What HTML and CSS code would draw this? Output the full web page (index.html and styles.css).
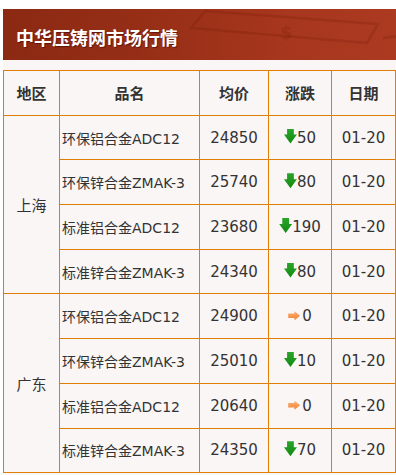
FILE: index.html
```html
<!DOCTYPE html>
<html lang="zh-CN">
<head>
<meta charset="utf-8">
<title>中华压铸网市场行情</title>
<link rel="stylesheet" href="styles.css">
</head>
<body>
<div class="panel">
  <div class="banner">
    <svg class="bill" width="393" height="51" viewBox="0 0 393 51" aria-hidden="true">
      <polygon points="202,2 375,15 364,34 188,19" fill="none" stroke="rgba(110,20,0,0.2)" stroke-width="2.5"/>
      <line x1="380" y1="29" x2="396" y2="27" stroke="rgba(110,20,0,0.2)" stroke-width="2.5"/>
      <text x="277" y="30" font-size="18" font-weight="bold" fill="rgba(110,20,0,0.2)" font-family="DejaVu Sans, sans-serif">$</text>
    </svg>
    <h1 class="title">中华压铸网市场行情</h1>
  </div>
  <table class="quotes">
    <colgroup>
      <col class="c-area"><col class="c-name"><col class="c-price"><col class="c-chg"><col class="c-date">
    </colgroup>
    <thead>
      <tr><th>地区</th><th>品名</th><th>均价</th><th>涨跌</th><th>日期</th></tr>
    </thead>
    <tbody>
      <tr><td class="area" rowspan="4">上海</td><td class="name">环保铝合金ADC12</td><td class="num">24850</td><td class="num"><span class="dn"></span>50</td><td class="num">01-20</td></tr>
      <tr><td class="name">环保锌合金ZMAK-3</td><td class="num">25740</td><td class="num"><span class="dn"></span>80</td><td class="num">01-20</td></tr>
      <tr><td class="name">标准铝合金ADC12</td><td class="num">23680</td><td class="num"><span class="dn"></span>190</td><td class="num">01-20</td></tr>
      <tr><td class="name">标准锌合金ZMAK-3</td><td class="num">24340</td><td class="num"><span class="dn"></span>80</td><td class="num">01-20</td></tr>
      <tr><td class="area" rowspan="4">广东</td><td class="name">环保铝合金ADC12</td><td class="num">24900</td><td class="num"><span class="eq"></span>0</td><td class="num">01-20</td></tr>
      <tr><td class="name">环保锌合金ZMAK-3</td><td class="num">25010</td><td class="num"><span class="dn"></span>10</td><td class="num">01-20</td></tr>
      <tr><td class="name">标准铝合金ADC12</td><td class="num">20640</td><td class="num"><span class="eq"></span>0</td><td class="num">01-20</td></tr>
      <tr><td class="name">标准锌合金ZMAK-3</td><td class="num">24350</td><td class="num"><span class="dn"></span>70</td><td class="num">01-20</td></tr>
    </tbody>
  </table>
</div>
</body>
</html>
```

FILE: styles.css
```css
html, body {
  margin: 0;
  padding: 0;
  background: #ffffff;
}

.panel {
  margin: 9px 0 0 3px;
  width: 393px;
  background: #faf6f5;
  font-family: "DejaVu Sans", "Noto Sans CJK SC", sans-serif;
  color: #333333;
  padding-bottom: 10px;
}

.banner {
  position: relative;
  height: 51px;
  background: linear-gradient(90deg, #8b2912 0%, #982f17 40%, #a6361d 70%, #ab3a21 100%);
  overflow: hidden;
  display: flex;
  align-items: center;
}

.bill {
  position: absolute;
  left: 0;
  top: 0;
}

.title {
  position: relative;
  margin: 4px 0 0 13px;
  font-family: "Noto Sans CJK SC", sans-serif;
  font-size: 18px;
  font-weight: bold;
  line-height: 20px;
  color: #ffffff;
  text-shadow: 1px 1px 1px rgba(60, 0, 0, 0.55);
}

.quotes {
  margin-top: 10px;
  width: 393px;
  table-layout: fixed;
  border-collapse: separate;
  border-spacing: 0;
  border-left: 1px solid #df7d06;
  border-top: 1px solid #df7d06;
}

.c-area { width: 56px; }
.c-name { width: 140px; }
.c-price { width: 69px; }
.c-chg { width: 63px; }
.c-date { width: 64px; }

.quotes th,
.quotes td {
  border-right: 1px solid #df7d06;
  border-bottom: 1px solid #df7d06;
  padding: 0;
  height: 43.7px;
  text-align: center;
  vertical-align: middle;
  white-space: nowrap;
}

.quotes th {
  font-family: "Noto Sans CJK SC", sans-serif;
  font-size: 15px;
  font-weight: bold;
  color: #333333;
}

.quotes td.area {
  font-family: "Noto Sans CJK SC", sans-serif;
  font-size: 15px;
}

.quotes td.name {
  text-align: left;
  padding-left: 2px;
  font-size: 14px;
}

.quotes td.num {
  font-size: 15px;
}

.dn {
  display: inline-block;
  width: 13px;
  height: 15px;
  vertical-align: -1px;
  background: linear-gradient(180deg, #2aa42a, #138a13);
  clip-path: polygon(24% 0, 76% 0, 76% 40%, 100% 40%, 50% 100%, 0 40%, 24% 40%);
}

.eq {
  display: inline-block;
  width: 12px;
  height: 9px;
  margin-right: 2px;
  vertical-align: 1px;
  background: linear-gradient(180deg, #fbb27a, #f0802f);
  clip-path: polygon(0 25%, 52% 25%, 52% 0, 100% 50%, 52% 100%, 52% 75%, 0 75%);
}
```
